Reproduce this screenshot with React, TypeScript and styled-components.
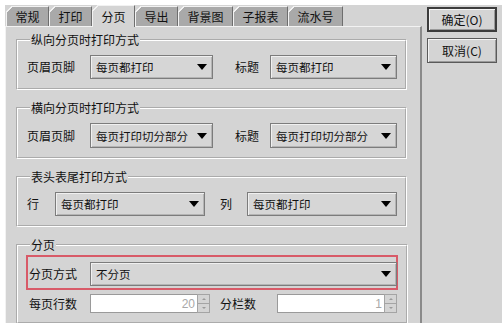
import React from 'react';
import styled, { createGlobalStyle } from 'styled-components';

const GlobalStyle = createGlobalStyle`
    html, body {
        margin: 0;
        padding: 0;
        background: #ffffff;
    }
    body {
        font-family: "Noto Sans CJK SC", "Noto Sans", sans-serif;
        font-size: 12px;
        color: #111;
    }
`;

const Window = styled.div`
    display: flex;
    width: 497px;
    height: 318px;
    margin: 5px 0 0 5px;
    background: #d4d4d4;
    overflow: hidden;
`;

const LeftPane = styled.div`
    display: flex;
    flex-direction: column;
    width: 417px;
`;

const TabStrip = styled.div`
    display: flex;
    align-items: flex-end;
    height: 21px;
    padding-left: 1px;
    position: relative;
    z-index: 1;
`;

const Tab = styled.div<{ $active?: boolean }>`
    position: relative;
    box-sizing: border-box;
    height: ${(p) => (p.$active ? '22px' : '20px')};
    margin-bottom: ${(p) => (p.$active ? '-1px' : '0')};
    padding: 0 8.5px;
    display: flex;
    align-items: center;
    background: ${(p) => (p.$active ? '#d4d4d4' : '#a9a9a9')};
    border-top: 1px solid #f2f2f2;
    border-left: 1px solid #f2f2f2;
    border-right: 1px solid #6e6e6e;
    line-height: 14px;
    white-space: nowrap;

    &::before {
        content: '';
        position: absolute;
        top: -1px;
        left: -1px;
        width: 6px;
        height: 6px;
        background: linear-gradient(135deg, #d4d4d4 0 48%, #f2f2f2 48% 64%, transparent 64%);
    }
`;

const Panel = styled.div`
    flex: 1;
    display: flex;
    flex-direction: column;
    gap: 11px;
    padding: 6px 13px 0 10px;
    border-top: 1px solid #f2f2f2;
    border-left: 1px solid #f2f2f2;
    border-right: 2px solid #8a8a8a;
`;

const Group = styled.fieldset<{ $padTop?: number }>`
    margin: 0;
    padding: ${(p) => p.$padTop ?? 8}px 8px 9px 9px;
    border: 2px groove #ffffff;
    display: flex;
    flex-direction: column;
`;

const Legend = styled.legend`
    padding: 0 1px;
    margin-left: 3px;
    line-height: 14px;
    font-size: 12px;
`;

const Row = styled.div`
    display: flex;
    align-items: center;
`;

const Label = styled.span<{ $w: number }>`
    width: ${(p) => p.$w}px;
    flex-shrink: 0;
    line-height: 14px;
`;

const Combo = styled.div<{ $w: number; $h?: number }>`
    box-sizing: border-box;
    width: ${(p) => p.$w}px;
    height: ${(p) => p.$h ?? 24}px;
    flex-shrink: 0;
    display: flex;
    align-items: center;
    justify-content: space-between;
    padding: 0 5px 0 5px;
    background: #d6d6d6;
    border: 1px solid #7c7c7c;
    box-shadow: inset 1px 1px 0 #f0f0f0, inset -1px -1px 0 #b4b4b4;
    font-size: 11.5px;
    white-space: nowrap;
`;

const Arrow = styled.span`
    width: 0;
    height: 0;
    flex-shrink: 0;
    margin-left: 4px;
    border-left: 5px solid transparent;
    border-right: 5px solid transparent;
    border-top: 6px solid #000;
`;

const Spacer = styled.span<{ $w: number }>`
    width: ${(p) => p.$w}px;
    flex-shrink: 0;
`;

const Highlight = styled.div`
    display: flex;
    align-items: center;
    box-sizing: border-box;
    width: 372px;
    margin-left: -1px;
    padding: 5px 0 2px 1px;
    border: 2px solid #d85a68;
`;

const SpinRow = styled(Row)`
    margin-top: 4px;
    padding-left: 2px;
`;

const Spinner = styled.div`
    display: flex;
    width: 120px;
    height: 19px;
    flex-shrink: 0;
`;

const SpinInput = styled.div`
    flex: 1;
    box-sizing: border-box;
    display: flex;
    align-items: center;
    justify-content: flex-end;
    padding-right: 2px;
    background: #ffffff;
    border: 1px solid #9a9a9a;
    border-right: none;
    color: #a8a8a8;
    font-family: "Liberation Sans", sans-serif;
    font-size: 12px;
`;

const SpinButtons = styled.div`
    width: 13px;
    display: flex;
    flex-direction: column;
`;

const SpinButton = styled.div<{ $up?: boolean }>`
    flex: 1;
    box-sizing: border-box;
    display: flex;
    align-items: center;
    justify-content: center;
    background: #d4d4d4;
    border: 1px solid #a4a4a4;
    border-top: ${(p) => (p.$up ? '1px solid #a4a4a4' : 'none')};

    &::after {
        content: '';
        width: 0;
        height: 0;
        border-left: 2px solid transparent;
        border-right: 2px solid transparent;
        ${(p) => (p.$up ? 'border-bottom: 2px solid #9a9a9a;' : 'border-top: 2px solid #9a9a9a;')}
    }
`;

const ButtonColumn = styled.div`
    display: flex;
    flex-direction: column;
    gap: 6px;
    padding: 2px 0 0 5px;
`;

const Button = styled.div<{ $default?: boolean }>`
    box-sizing: border-box;
    width: 70px;
    height: 25px;
    display: flex;
    align-items: center;
    justify-content: center;
    background: #d4d4d4;
    border: ${(p) => (p.$default ? '2px solid #3c3c3c' : '1px solid #5a5a5a')};
    box-shadow: inset 1px 1px 0 #f4f4f4, inset -1px -1px 0 #9a9a9a;
    font-size: 12px;
`;

const tabs = ['常规', '打印', '分页', '导出', '背景图', '子报表', '流水号'];

function Select({ width, value, height }: { width: number; value: string; height?: number }) {
    return (
        <Combo $w={width} $h={height}>
            <span>{value}</span>
            <Arrow />
        </Combo>
    );
}

function Spin({ value }: { value: string }) {
    return (
        <Spinner>
            <SpinInput>{value}</SpinInput>
            <SpinButtons>
                <SpinButton $up />
                <SpinButton />
            </SpinButtons>
        </Spinner>
    );
}

export default function App() {
    return (
        <>
            <GlobalStyle />
            <Window>
                <LeftPane>
                    <TabStrip>
                        {tabs.map((t) => (
                            <Tab key={t} $active={t === '分页'}>
                                {t}
                            </Tab>
                        ))}
                    </TabStrip>
                    <Panel>
                        <Group>
                            <Legend>纵向分页时打印方式</Legend>
                            <Row>
                                <Label $w={63}>页眉页脚</Label>
                                <Select width={123} value="每页都打印" />
                                <Spacer $w={22} />
                                <Label $w={35}>标题</Label>
                                <Select width={127} value="每页都打印" />
                            </Row>
                        </Group>
                        <Group>
                            <Legend>横向分页时打印方式</Legend>
                            <Row>
                                <Label $w={63}>页眉页脚</Label>
                                <Select width={123} value="每页打印切分部分" height={25} />
                                <Spacer $w={22} />
                                <Label $w={35}>标题</Label>
                                <Select width={127} value="每页打印切分部分" height={25} />
                            </Row>
                        </Group>
                        <Group>
                            <Legend>表头表尾打印方式</Legend>
                            <Row>
                                <Label $w={28}>行</Label>
                                <Select width={150} value="每页都打印" />
                                <Spacer $w={15} />
                                <Label $w={27}>列</Label>
                                <Select width={150} value="每页都打印" />
                            </Row>
                        </Group>
                        <Group $padTop={3}>
                            <Legend>分页</Legend>
                            <Highlight>
                                <Label $w={61}>分页方式</Label>
                                <Select width={307} value="不分页" />
                            </Highlight>
                            <SpinRow>
                                <Label $w={61}>每页行数</Label>
                                <Spin value="20" />
                                <Spacer $w={10} />
                                <Label $w={57}>分栏数</Label>
                                <Spin value="1" />
                            </SpinRow>
                        </Group>
                    </Panel>
                </LeftPane>
                <ButtonColumn>
                    <Button $default>确定(O)</Button>
                    <Button>取消(C)</Button>
                </ButtonColumn>
            </Window>
        </>
    );
}
